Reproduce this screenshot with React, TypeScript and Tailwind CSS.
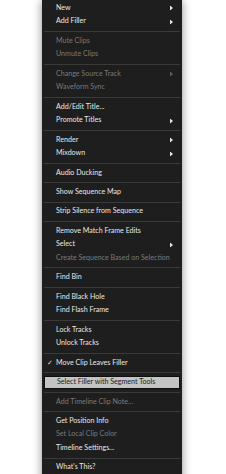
type Item =
  | { kind: "sep" }
  | { kind: "item"; label: string; disabled?: boolean; sub?: boolean; checked?: boolean; active?: boolean };

const sep: Item = { kind: "sep" };
const it = (label: string, opts: Partial<Omit<Extract<Item, { kind: "item" }>, "kind" | "label">> = {}): Item => ({
  kind: "item",
  label,
  ...opts,
});

const ITEMS: Item[] = [
  it("New", { sub: true }),
  it("Add Filler", { sub: true }),
  sep,
  it("Mute Clips", { disabled: true }),
  it("Unmute Clips", { disabled: true }),
  sep,
  it("Change Source Track", { disabled: true, sub: true }),
  it("Waveform Sync", { disabled: true }),
  sep,
  it("Add/Edit Title..."),
  it("Promote Titles", { sub: true }),
  sep,
  it("Render", { sub: true }),
  it("Mixdown", { sub: true }),
  sep,
  it("Audio Ducking"),
  sep,
  it("Show Sequence Map"),
  sep,
  it("Strip Silence from Sequence"),
  sep,
  it("Remove Match Frame Edits"),
  it("Select", { sub: true }),
  it("Create Sequence Based on Selection", { disabled: true }),
  sep,
  it("Find Bin"),
  sep,
  it("Find Black Hole"),
  it("Find Flash Frame"),
  sep,
  it("Lock Tracks"),
  it("Unlock Tracks"),
  sep,
  it("Move Clip Leaves Filler", { checked: true }),
  sep,
  it("Select Filler with Segment Tools", { active: true }),
  sep,
  it("Add Timeline Clip Note...", { disabled: true }),
  sep,
  it("Get Position Info"),
  it("Set Local Clip Color", { disabled: true }),
  it("Timeline Settings..."),
  sep,
  it("What's This?"),
];

function Arrow({ dim }: { dim?: boolean }) {
  return (
    <svg className="absolute right-[9px] top-1/2 h-[5px] w-[3px] -translate-y-1/2" viewBox="0 0 3 5">
      <path d="M0 0 L3 2.5 L0 5 Z" fill={dim ? "#5e5e5e" : "#e6e6e6"} />
    </svg>
  );
}

export default function App() {
  return (
    <div className="h-[474px] w-[226px] overflow-hidden bg-white">
      <div
        className="ml-[42px] flex h-[490px] w-[140px] flex-col bg-[#1e1e1e] pt-[1.5px] shadow-[0_0_9px_rgba(0,0,0,0.45)]"
        style={{ fontFamily: 'Lato, "Liberation Sans", sans-serif' }}
      >
        {ITEMS.map((item, i) =>
          item.kind === "sep" ? (
            <div key={i} className="flex h-[5.95px] items-center px-[2px]">
              <div className="h-px w-full bg-[#3a3a3a]" />
            </div>
          ) : item.active ? (
            <div key={i} className="mx-[2px] flex h-[13.5px] items-center border border-[#0e0e0e] bg-[#c4c4c4] pl-[12px] text-[7.1px] text-[#222]">
              {item.label}
            </div>
          ) : (
            <div
              key={i}
              className={`relative flex h-[13.5px] items-center pl-[14px] text-[7.1px] ${
                item.disabled ? "text-[#7a7a7a]" : "text-[#e8e8e8]"
              }`}
            >
              {item.checked && <span className="absolute left-[5px] text-[6.5px] text-[#d8d8d8]">✓</span>}
              {item.label}
              {item.sub && <Arrow dim={item.disabled} />}
            </div>
          ),
        )}
      </div>
    </div>
  );
}
